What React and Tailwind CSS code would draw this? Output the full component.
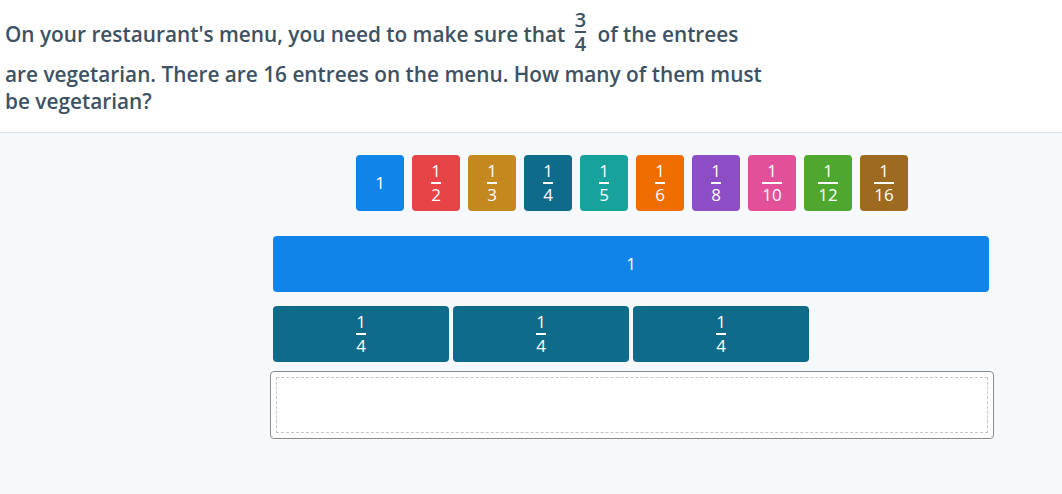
import React from 'react';

const tiles = [
  { d: null, color: 'bg-[#1184ea]' },
  { d: 2, color: 'bg-[#e64446]' },
  { d: 3, color: 'bg-[#c3891f]' },
  { d: 4, color: 'bg-[#0f6b8a]' },
  { d: 5, color: 'bg-[#17a39b]' },
  { d: 6, color: 'bg-[#ef6c00]' },
  { d: 8, color: 'bg-[#8d4dc5]' },
  { d: 10, color: 'bg-[#e44f99]' },
  { d: 12, color: 'bg-[#4ea72e]' },
  { d: 16, color: 'bg-[#9e6a1f]' },
];

// Stacked fraction with a short bar between the numbers
const Fraction = ({ n, d, className = '' }) => (
  <span className={`inline-flex flex-col items-center leading-none ${className}`}>
    <span className="leading-[18px]">{n}</span>
    <span className="h-[2px] w-full min-w-[10px] bg-current my-[2px]" />
    <span className="leading-[18px]">{d}</span>
  </span>
);

const App = () => {
  return (
    <div className="min-h-[494px] flex flex-col bg-[#f5f9fc] font-['Open_Sans',sans-serif]">
      {/* Question */}
      <div className="bg-white border-b border-[#d3e2e8] pl-[5px] pt-[11px] pb-[17px]">
        <p className="w-[790px] text-[20.8px] font-semibold text-[#3d5263] leading-[27px]">
          On your restaurant's menu, you need to make sure that{' '}
          <Fraction n="3" d="4" className="align-middle ml-[3px] mr-[5px] px-[1px] mb-[8px] text-[20px]" />{' '}
          of the entrees
          <br />
          are vegetarian. There are 16 entrees on the menu. How many of them must
          <br />
          be vegetarian?
        </p>
      </div>

      {/* Workspace */}
      <div className="flex-1 pl-[270px] pt-[22px]">
        <div className="w-[724px] flex flex-col items-center">
          {/* Tile palette */}
          <div className="flex gap-[8px]">
            {tiles.map((t, i) => (
              <div
                key={i}
                className={`${t.color} w-[48px] h-[56px] rounded-[4px] flex items-center justify-center text-white text-[17px] font-medium`}
              >
                {t.d ? <Fraction n="1" d={t.d} /> : <span>1</span>}
              </div>
            ))}
          </div>

          {/* Whole bar */}
          <div className="mt-[25px] self-start ml-[3px] w-[716px] h-[56px] rounded-[4px] bg-[#1184ea] flex items-center justify-center text-white text-[17px] font-medium">
            1
          </div>

          {/* Quarter strips */}
          <div className="mt-[14px] self-start ml-[3px] w-[716px] flex gap-[4px]">
            {[0, 1, 2].map((i) => (
              <div
                key={i}
                className="w-[176px] h-[56px] rounded-[4px] bg-[#0f6b8a] flex items-center justify-center text-white text-[17px] font-medium"
              >
                <Fraction n="1" d="4" />
              </div>
            ))}
          </div>

          {/* Drop zone */}
          <div className="mt-[9px] w-[724px] h-[68px] rounded-[4px] border border-[#8a8a8a] bg-white p-[5px]">
            <div className="w-full h-full border border-dashed border-[#c4c4c4]" />
          </div>
        </div>
      </div>
    </div>
  );
};

export default App;
